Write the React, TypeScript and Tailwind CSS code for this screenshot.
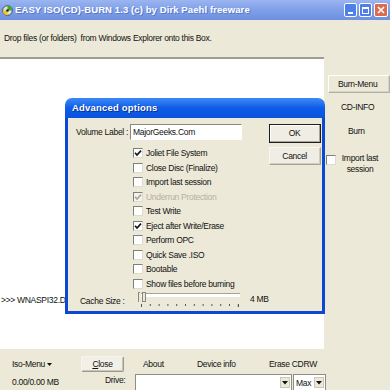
import React from 'react';

interface CheckProps {
  readonly checked?: boolean;
  readonly disabled?: boolean;
}

/** Classic sunken checkbox */
function Check({ checked, disabled }: CheckProps) {
  return (
    <span
      className={`flex h-[10px] w-[10px] shrink-0 items-center justify-center border border-t-[#808078] border-l-[#808078] border-b-[#dedcd2] border-r-[#dedcd2] ${
        disabled ? 'bg-[#f3f2ec]' : 'bg-white'
      }`}
    >
      {checked && (
        <svg width="8" height="8" viewBox="0 0 8 8">
          <path
            d="M1 3.8 L3 6 L7 1.6"
            fill="none"
            stroke={disabled ? '#a9a89c' : '#161616'}
            strokeWidth="1.7"
          />
        </svg>
      )}
    </span>
  );
}

/** Small dropdown arrow button of a combo box */
function ComboArrow() {
  return (
    <span className="flex h-[11px] w-[10px] items-center justify-center border border-[#c9c7bb] bg-[#ece9d8]">
      <svg width="6" height="4" viewBox="0 0 6 4">
        <path d="M0 0 H6 L3 3.5 Z" fill="#111" />
      </svg>
    </span>
  );
}

const options = [
  { label: 'Joliet File System', checked: true },
  { label: 'Close Disc (Finalize)' },
  { label: 'Import last session' },
  { label: 'Underrun Protection', checked: true, disabled: true },
  { label: 'Test Write' },
  { label: 'Eject after Write/Erase', checked: true },
  { label: 'Perform OPC' },
  { label: 'Quick Save .ISO' },
  { label: 'Bootable' },
  { label: 'Show files before burning' },
];

export default function App() {
  return (
    <div className="relative h-[390px] w-[390px] overflow-hidden whitespace-nowrap bg-[#ece9d8] font-['Liberation_Sans',Arial,sans-serif] text-[8.5px] leading-none tracking-[-0.3px] text-[#111]">
      {/* Window title bar */}
      <div className="flex h-[20px] items-center bg-linear-to-b from-[#9bb5f0] via-[#7f9fe8] to-[#6d8fe0]">
        <svg width="11" height="11" viewBox="0 0 11 11" className="ml-[2px]">
          <circle cx="5.5" cy="5.5" r="4.8" fill="#e9e6c8" stroke="#333" strokeWidth="0.8" />
          <path d="M5.5 0.7 A4.8 4.8 0 0 1 10.3 5.5 L5.5 5.5 Z" fill="#3aa83a" />
          <path d="M5.5 5.5 L0.7 5.5 A4.8 4.8 0 0 0 5.5 10.3 Z" fill="#e8c52c" />
          <circle cx="5.5" cy="5.5" r="1.3" fill="#222" />
        </svg>
        <span className="ml-[2px] text-[9.5px] font-bold tracking-[0.1px] text-white [text-shadow:1px_1px_0_#5a78c8]">
          EASY ISO(CD)-BURN 1.3 (c) by Dirk Paehl freeware
        </span>
        <div className="ml-auto mr-[2px] flex gap-[2px]">
          <span className="flex h-[14px] w-[13px] items-end justify-center rounded-[2px] border border-white bg-[#4f80e8] pb-[2px]">
            <span className="h-[2px] w-[5px] bg-white" />
          </span>
          <span className="flex h-[14px] w-[13px] items-center justify-center rounded-[2px] border border-white bg-[#4f80e8]">
            <span className="h-[7px] w-[7px] border border-t-2 border-white" />
          </span>
          <span className="flex h-[14px] w-[14px] items-center justify-center rounded-[2px] border border-white bg-[#dc6a4e]">
            <svg width="8" height="8" viewBox="0 0 8 8">
              <path d="M1 1 L7 7 M7 1 L1 7" stroke="#fff" strokeWidth="1.6" />
            </svg>
          </span>
        </div>
      </div>

      {/* Drop hint */}
      <div className="flex h-[37px] items-center pl-[4px]">
        Drop files (or folders)&nbsp; from Windows Explorer onto this Box.
      </div>

      {/* Main area: file list and right menu */}
      <div className="flex h-[292px]">
        <div className="flex w-[328px] flex-col justify-end border-t-2 border-[#a19e90] bg-white pb-[45px]">
          <span className="pl-[1px]">&gt;&gt;&gt; WNASPI32.DLL</span>
        </div>
        <div className="flex flex-1 flex-col pt-[18px]">
          <div className="ml-[4px] flex h-[18px] w-[62px] items-center border border-[#b2b0a4] border-t-white border-l-white pl-[9px] shadow-[inset_-1px_-1px_0_#d6d4c8]">
            Burn-Menu
          </div>
          <div className="mt-[4px] flex h-[20px] items-center pl-[17px]">CD-INFO</div>
          <div className="mt-[4px] flex h-[20px] items-center pl-[24px]">Burn</div>
          <div className="mt-[12px] flex">
            <span className="ml-[2px] mt-[2px]">
              <Check />
            </span>
            <span className="ml-[3px] w-[42px] text-center leading-[11px]">
              Import last
              <br />
              session
            </span>
          </div>
        </div>
      </div>

      {/* Bottom bar */}
      <div className="flex h-[41px] flex-col">
        <div className="mt-[7px] flex h-[16px] items-center pl-[12px]">
          <span className="flex w-[69px] items-center">
            Iso-Menu
            <svg width="5" height="3" viewBox="0 0 5 3" className="ml-[2px]">
              <path d="M0 0 H5 L2.5 3 Z" fill="#111" />
            </svg>
          </span>
          <span className="flex h-[16px] w-[43px] items-center justify-center rounded-[2px] border border-[#9c9a8e] border-t-[#f6f5f0] border-l-[#f6f5f0] bg-[#f1efe6] shadow-[inset_-1px_-1px_0_#c8c6ba]">
            <span className="underline">C</span>lose
          </span>
          <span className="ml-[19px] w-[54px]">About</span>
          <span className="w-[72px]">Device info</span>
          <span>Erase CDRW</span>
        </div>
        <div className="mt-[2px] flex h-[16px] items-start pl-[12px]">
          <span className="mt-[4px] w-[93px]">0.00/0.00 MB</span>
          <span className="mt-[2px] w-[30px]">Drive:</span>
          <div className="flex h-[16px] w-[157px] items-start justify-end border border-[#8f8d82] border-b-0 bg-white pr-[1px] pt-[2px]">
            <ComboArrow />
          </div>
          <div className="ml-[1px] flex h-[16px] w-[33px] items-start justify-between border border-[#8f8d82] border-b-0 bg-white pl-[2px] pr-[1px] pt-[2px]">
            <span className="mt-[2px]">Max</span>
            <ComboArrow />
          </div>
        </div>
      </div>

      {/* Advanced options dialog (floats over the main window) */}
      <div className="absolute left-[65px] top-[98px] flex h-[216px] w-[260px] flex-col">
        <div className="flex h-[20px] items-center rounded-t-[7px] bg-linear-to-b from-[#3c8af6] via-[#0d5ce8] to-[#0a52dc] pl-[7px]">
          <span className="text-[9.5px] font-bold tracking-[0.2px] text-white [text-shadow:1px_1px_0_#0a2f90]">
            Advanced options
          </span>
        </div>
        <div className="flex flex-1 border-x-[3px] border-b-[3px] border-[#0b48d6] bg-[#ece9d8]">
          <div className="flex flex-1 flex-col pt-[6px]">
            <div className="flex h-[16px] items-center pl-[8px]">
              <span className="w-[54px]">Volume Label :</span>
              <span className="flex h-[16px] w-[112px] items-center border border-[#8a887c] border-b-white border-r-white bg-white pl-[2px]">
                MajorGeeks.Com
              </span>
            </div>
            <div className="mt-[6px] flex flex-col pl-[65px]">
              {options.map((o) => (
                <div key={o.label} className="flex h-[14.5px] items-center">
                  <Check checked={o.checked} disabled={o.disabled} />
                  <span className={`ml-[3px] ${o.disabled ? 'text-[#b3b1a5]' : ''}`}>{o.label}</span>
                </div>
              ))}
            </div>
            <div className="mt-[1px] flex h-[16px] items-start pl-[12px]">
              <span className="mt-[5px] w-[58px]">Cache Size :</span>
              <div className="relative h-[16px] w-[104px]">
                <span className="absolute left-0 top-0 h-[10px] w-[2px] border-l border-t border-[#8a887c]" />
                <span className="absolute left-[3px] right-[2px] top-[1px] h-[4px] border-t border-[#a6a498] bg-white" />
                <span className="absolute left-[4px] top-0 h-[10px] w-[4px] border border-[#8a887c] bg-[#ece9d8]" />
                <svg width="104" height="4" viewBox="0 0 104 4" className="absolute left-0 top-[12px]">
                  {Array.from({ length: 12 }).map((_, i) => (
                    <rect key={i} x={3 + i * 8.8} y="0" width="1" height={i === 0 || i === 11 ? 3 : 2} fill="#555" />
                  ))}
                  <rect x="100" y="0" width="1" height="3" fill="#555" />
                </svg>
              </div>
              <span className="ml-[8px] mt-[3px]">4 MB</span>
            </div>
          </div>
          <div className="mr-[20px] flex flex-col pt-[6px]">
            <span className="flex h-[19px] w-[52px] items-center justify-center border border-[#1e1e1e] bg-[#efede4] shadow-[inset_-1px_-1px_0_#a8a69a,inset_1px_1px_0_#fff]">
              OK
            </span>
            <span className="mt-[4px] flex h-[18px] w-[52px] items-center justify-center border border-[#a6a498] border-t-[#f8f7f2] border-l-[#f8f7f2] bg-[#efede4] shadow-[inset_-1px_-1px_0_#cfcdc1]">
              Cancel
            </span>
          </div>
        </div>
      </div>
    </div>
  );
}
